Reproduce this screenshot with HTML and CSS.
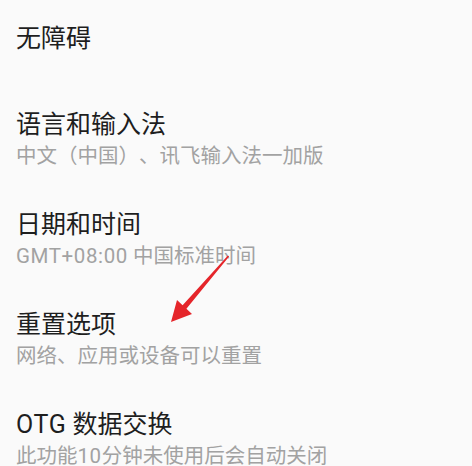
FILE: index.html
```html
<!DOCTYPE html>
<html lang="zh-CN">
<head>
<meta charset="utf-8">
<link rel="stylesheet" href="styles.css">
</head>
<body>
<div class="screen">
  <ul class="list">
    <li class="item item-single">
      <div class="title">无障碍</div>
    </li>
    <li class="item">
      <div class="title">语言和输入法</div>
      <div class="sub">中文（中国）、讯飞输入法一加版</div>
    </li>
    <li class="item">
      <div class="title">日期和时间</div>
      <div class="sub"><span class="latin">GMT+08:00</span> 中国标准时间</div>
    </li>
    <li class="item">
      <div class="title">重置选项</div>
      <div class="sub">网络、应用或设备可以重置</div>
    </li>
    <li class="item">
      <div class="title"><span class="latin">OTG</span> 数据交换</div>
      <div class="sub">此功能<span class="latin">10</span>分钟未使用后会自动关闭</div>
    </li>
  </ul>
  <svg class="arrow" viewBox="0 0 472 466" width="472" height="466">
    <polygon points="229.1,256.5 186.4,308.7 192,314 171,322 177,300 182.6,305.3 227.9,255.5" fill="#e5252a"/>
  </svg>
</div>
</body>
</html>
```

FILE: styles.css
```css
html, body {
  margin: 0;
  padding: 0;
  background: #fafafa;
}
.screen {
  position: relative;
  width: 472px;
  height: 466px;
  overflow: hidden;
  font-family: Roboto, "Noto Sans CJK SC", sans-serif;
  text-spacing-trim: space-all;
}
.list {
  list-style: none;
  margin: 0;
  padding: 0;
}
.item {
  display: flex;
  flex-direction: column;
  padding: 19px 16px;
}
.item-single {
  padding-top: 23px;
  padding-bottom: 35px;
}
.title {
  font-size: 25px;
  line-height: 32px;
  color: #1e1e1e;
  white-space: nowrap;
}
.sub {
  font-size: 20.5px;
  line-height: 30px;
  color: #a2a2a2;
  white-space: nowrap;
}
.latin {
  letter-spacing: 0.6px;
}
.arrow {
  position: absolute;
  top: 0;
  left: 0;
  pointer-events: none;
}
```
